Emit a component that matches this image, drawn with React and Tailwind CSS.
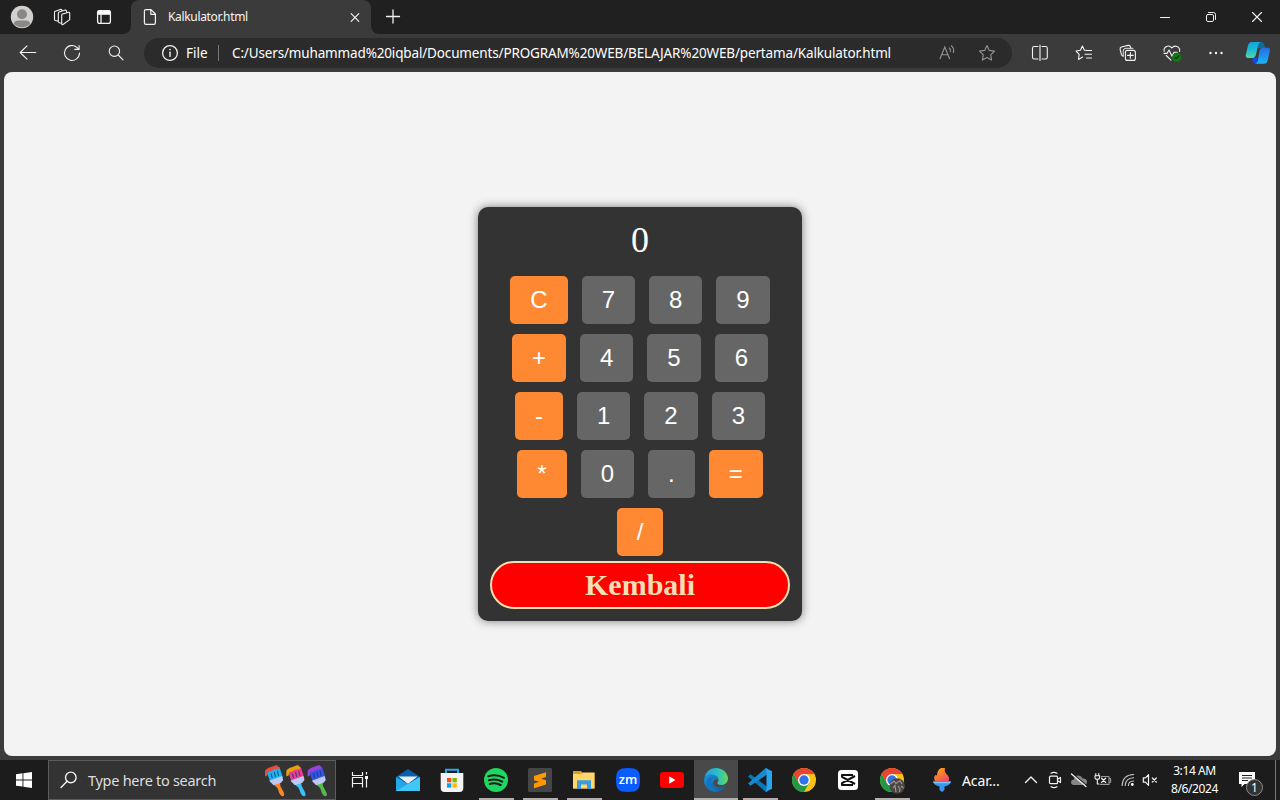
import React from "react";

const Icon = ({ w = 20, h = 20, sw = 1.1, children }) => (
  <svg width={w} height={h} viewBox={`0 0 ${w} ${h}`} fill="none" stroke="#f2f2f2" strokeWidth={sw} strokeLinecap="round" strokeLinejoin="round" className="block shrink-0">
    {children}
  </svg>
);

const Cell = ({ className = "", children }) => (
  <div className={`flex shrink-0 items-center justify-center ${className}`}>{children}</div>
);

const STAR = "M10 2.6 12.3 7.4 17.5 8.1 13.7 11.8 14.6 17.1 10 14.6 5.4 17.1 6.3 11.8 2.5 8.1 7.7 7.4Z";

function TitleBar() {
  return (
    <div className="flex h-[34px] bg-[#202020]">
      <Cell className="w-11">
        <Icon w={24} h={24}>
          <circle cx="12" cy="12" r="11.2" fill="#d2d0ce" stroke="none" />
          <circle cx="12" cy="9.3" r="5" fill="#8a8886" stroke="none" />
          <path d="M3.6 18.6Q5 15.5 8 15.5H16Q19 15.5 20.4 18.6A11.2 11.2 0 0 1 3.6 18.6Z" fill="#8a8886" stroke="none" />
        </Icon>
      </Cell>
      <Cell className="w-9">
        <Icon w={20} h={20}>
          <path d="M10 7.2 16.6 5.2Q17.7 5 17.7 6.2V12.6L11 17.5Q9.7 18.2 9.7 16.7V8.3Q9.7 7.4 10.2 7.1ZM9.3 16.3 7.3 15.7Q6.3 15.3 6.3 14.4V6.3Q6.3 5.4 7.1 5.1L13.3 3.1Q14.5 3 14.7 5M6.2 14.3 3.4 13.5Q2.5 13.2 2.5 12.2V5.3Q2.5 4.5 3.3 4.2L8.3 2.5Q9.7 2.1 10 3.5" />
        </Icon>
      </Cell>
      <Cell className="w-[51px] pr-[3px]">
        <Icon w={18} h={18} sw={1.3}>
          <rect x="2.6" y="2.6" width="12.8" height="12.8" rx="2.2" />
          <path d="M2.6 6.2V4.8Q2.6 2.6 4.8 2.6H13.2Q15.4 2.6 15.4 4.8V6.2Z" fill="#fff" />
          <path d="M6 6.5V15" />
        </Icon>
      </Cell>
      <div className="relative flex w-60 items-center rounded-t-lg bg-[#3b3b3b]">
        <svg width="8" height="8" className="absolute -left-2 bottom-0"><path d="M8 0V8H0A8 8 0 0 0 8 0Z" fill="#3b3b3b" /></svg>
        <svg width="8" height="8" className="absolute -right-2 bottom-0"><path d="M0 0V8H8A8 8 0 0 1 0 0Z" fill="#3b3b3b" /></svg>
        <Cell className="w-[37px]">
          <Icon w={16} h={18} sw={1.2}>
            <path d="M4 1.6H9L13.4 6V14.7Q13.4 16.4 11.8 16.4H4Q2.4 16.4 2.4 14.8V3.2Q2.4 1.6 4 1.6ZM8.8 1.8V6.3H13.2" />
          </Icon>
        </Cell>
        <span className="w-[168px] whitespace-nowrap text-xs tracking-[-0.33px] text-[#f5f5f5]">Kalkulator.html</span>
        <Cell className="w-[35px] pl-[3px]"><Icon w={12} h={12} sw={1.2}><path d="M2.2 2.7 9.8 10.3M9.8 2.7 2.2 10.3" /></Icon></Cell>
      </div>
      <Cell className="w-[43px]"><Icon w={16} h={16} sw={1.3}><path d="M1.5 7.5H14.5M8 1V14" /></Icon></Cell>
      <div className="flex-1" />
      <Cell className="w-[46px]"><Icon w={12} h={12}><path d="M1.5 6.5H10.5" /></Icon></Cell>
      <Cell className="w-[46px]"><Icon w={12} h={12} sw={1}><rect x="1.5" y="3.5" width="7" height="7" rx="1.4" /><path d="M3.5 1.5H8.5Q10.5 1.5 10.5 3.5V8.5" /></Icon></Cell>
      <Cell className="w-[46px]"><Icon w={12} h={12}><path d="M1.5 1.5 10.5 10.5M10.5 1.5 1.5 10.5" /></Icon></Cell>
    </div>
  );
}

function Toolbar() {
  return (
    <div className="flex h-[38px] bg-[#3b3b3b] pl-1.5">
      <Cell className="w-11"><Icon><path d="M2.5 9.5H17.8M9 2.8 2.2 9.5 9 16.2" /></Icon></Cell>
      <Cell className="w-11"><Icon><path d="M17.5 10A7.5 7.5 0 1 1 14.9 4.3L17 6.3M17.1 2.5V6.4H12.7" /></Icon></Cell>
      <Cell className="w-11"><Icon><circle cx="8.4" cy="8.2" r="5.2" /><path d="M12.2 12 17 16.8" /></Icon></Cell>
      <div className="ml-1.5 mt-1 flex h-[30px] w-[868px] shrink-0 items-center rounded-full bg-[#2b2b2b] pl-4 pr-[15px] text-white">
        <Icon sw={1.3}><circle cx="10" cy="10" r="7.4" /><path d="M10 9.2V13.4" strokeWidth="1.4" /><circle cx="10" cy="6.6" r=".8" fill="#fff" stroke="none" /></Icon>
        <span className="ml-1.5 w-8 pt-px text-[13.5px]">File</span>
        <span className="h-4 w-px bg-[#777]" />
        <span className="ml-[13px] flex-1 whitespace-nowrap pt-px text-[13.5px] tracking-[-0.15px]">C:/Users/muhammad%20iqbal/Documents/PROGRAM%20WEB/BELAJAR%20WEB/pertama/Kalkulator.html</span>
        <svg width="20" height="20" viewBox="0 0 20 20" fill="none" stroke="#949494" strokeWidth="1.1" strokeLinecap="round" className="mr-5">
          <path d="M3 15.8 7.8 4 12.6 15.8M4.7 11.7H11M12.3 5Q13.8 6.3 13.4 8.6M14.3 2.8Q17.5 5.2 16.4 9.5" />
        </svg>
        <svg width="20" height="20" viewBox="0 0 20 20" fill="none" stroke="#949494" strokeWidth="1.1" strokeLinejoin="round"><path d={STAR} /></svg>
      </div>
      <Cell className="ml-1.5 w-11"><Icon><path d="M8 3.5H4.3Q2.5 3.5 2.5 5.3V14.2Q2.5 16 4.3 16H8M12 3.5H15.5Q17.3 3.5 17.3 5.3V14.2Q17.3 16 15.5 16H12M10 2V17.5" /></Icon></Cell>
      <Cell className="w-11"><Icon><path d="M12.3 7.3H10.4L8.4 3 6.4 7.3 2 8 5.2 11.3 4.5 16.4 8.6 14.1M12.5 7.5H17.5M11 11.3H17.5M12.5 15H17.5" /></Icon></Cell>
      <Cell className="w-11"><Icon><rect x="7.4" y="7.4" width="10" height="10" rx="2" /><path d="M12.4 9.5V15.3M9.5 12.4H15.3M5.2 13.2 4.8 13Q3.8 12.5 3.4 11.4L2.1 6.3Q1.8 4.6 3.5 4L10 2.4Q11.7 2.1 12.3 3.5L12.8 5.1" /><path d="M15 5.3H8Q5.2 5.3 5.2 8V13" strokeWidth=".9" /></Icon></Cell>
      <Cell className="w-11">
        <Icon>
          <path d="M2.1 8.3C1.4 3.4 7 1.3 9.8 5 12.6 1.3 18.6 3.5 17.5 8.4M2 10.4H5L7 7 10 13.2 12 9.2H15.3M4.2 12.5 9 17.2" />
          <circle cx="14.8" cy="14.3" r="4.5" fill="#107c10" stroke="none" /><path d="M12.9 14.3 14.2 15.6 16.8 13" stroke="#062d06" />
        </Icon>
      </Cell>
      <Cell className="w-11"><Icon><g fill="#f5f5f5" stroke="none"><circle cx="4.5" cy="10" r="1.2" /><circle cx="10" cy="10" r="1.2" /><circle cx="15.5" cy="10" r="1.2" /></g></Icon></Cell>
      <Cell className="w-10">
        <svg width="26" height="24" viewBox="0 0 26 24">
          <defs>
            <linearGradient id="copA" x1="0" y1="0" x2="0" y2="1"><stop stopColor="#16a3dc" /><stop offset=".5" stopColor="#1bbdd3" /><stop offset="1" stopColor="#58d49c" /></linearGradient>
            <linearGradient id="copB" x1="0" y1="0" x2="0" y2="1"><stop stopColor="#256ddd" /><stop offset="1" stopColor="#1bb5f6" /></linearGradient>
          </defs>
          <path d="M13 1H16.5Q18.4 1 19 3L20 7H12.5Z" fill="#096c99" />
          <path d="M7 16.5H12V22.8H11Q8.3 22.8 7.6 20Z" fill="#1649dc" />
          <path d="M6.8 1H16Q14 1.4 13.2 4L11 13.5Q10.2 17 7.2 17H3Q.2 17 .8 13.6L3.2 4Q4.1 1 6.8 1Z" fill="url(#copA)" />
          <path d="M17.2 6.8H22.8Q25.6 7 24.8 10.3L22.5 20Q21.7 22.8 18.8 22.8H10Q12.3 22.2 12.8 19.6L14.6 9.5Q15.1 6.8 17.2 6.8Z" fill="url(#copB)" />
        </svg>
      </Cell>
    </div>
  );
}

const ROWS = [["C", "7", "8", "9"], ["+", "4", "5", "6"], ["-", "1", "2", "3"], ["*", "0", ".", "="], ["/"]];

function Calculator() {
  return (
    <div className="flex h-[414px] w-[324px] flex-col rounded-[10px] bg-[#333] px-3 pb-3 pt-[13px] shadow-[0_0_10px_rgba(0,0,0,0.5)]">
      <div className="h-[56px] text-center font-['Liberation_Serif',serif] text-4xl leading-[41px] text-white">0</div>
      <div className="flex flex-col gap-2.5">
        {ROWS.map((row) => (
          <div key={row[0]} className="flex justify-center gap-3.5">
            {row.map((k) => (
              <button key={k} className={`h-12 rounded-[5px] px-5 font-['Liberation_Sans',sans-serif] text-2xl leading-none text-white ${/[0-9.]/.test(k) ? "bg-[#666]" : "bg-[#ff8833]"}`}>{k}</button>
            ))}
          </div>
        ))}
      </div>
      <button className="mt-[5px] h-12 w-[300px] shrink-0 rounded-full border-2 border-[#f5deb3] bg-[red] font-['Liberation_Serif',serif] text-[30px] font-bold leading-none text-[#f5deb3]">Kembali</button>
    </div>
  );
}

const Brush = ({ x, rim, bristle, handle }) => (
  <g transform={`translate(${x} 0)`}>
    <path d="M9 19 15 17Q14.5 21 17.5 25 20.5 30 18.5 31 16 32 14 27.5Q12.8 22 10 21Z" fill={handle} />
    <path d="M1.5 6 14.5 2 18 13 5.5 17.5Z" fill={bristle} />
    <path d="M0 11.5V6Q1 3.5 6 2L11.5 0 14 2.3 13.4 4.2 9 4.6 6 6.6 3 7 2.3 10.5Z" fill={rim} />
    <path d="M6 8.5 7.2 13M9.2 7 10.5 12M12.4 5.8 13.6 11" stroke="#17366f" strokeOpacity=".75" strokeWidth="1.1" />
    <path d="M4.2 15.8 17 11 18.2 15 16 17.8 8.6 20.2Z" fill="#bdc8f5" />
  </g>
);

const Chrome = () => (
  <>
    <circle cx="12" cy="12" r="12" fill="#fbc116" />
    <path d="M12 12 6.8 15 1.6 6A12 12 0 0 0 12 24L17.2 15Z" fill="#229a45" />
    <path d="M1.6 6A12 12 0 0 1 22.4 6H12L6.8 15Z" fill="#ea4335" />
    <circle cx="12" cy="12" r="6" fill="#fff" /><circle cx="12" cy="12" r="4.7" fill="#3173e8" />
  </>
);

const APPS = [
  { id: "mail", art: <><path d="M0 9 12 1 24 9V13H0Z" fill="#0861ae" /><path d="M2.5 8.5H21.5L12 16Z" fill="#eceff2" /><path d="M0 9 12 16 24 9V23H0Z" fill="#23a7e8" /><path d="M0 23 24 9V23Z" fill="#41c7f6" /></> },
  { id: "store", art: <><path d="M6 6V1.8H18V6" fill="none" stroke="#28a8ea" strokeWidth="2" /><path d="M.7 5H23.3V20Q23.3 24 19.5 24H4.5Q.7 24 .7 20Z" fill="#f3f3f3" /><path d="M7 10H11.3V14.3H7Z" fill="#f25022" /><path d="M12.5 10H16.8V14.3H12.5Z" fill="#7fba00" /><path d="M7 15.3H11.3V19.6H7Z" fill="#00a4ef" /><path d="M12.5 15.3H16.8V19.6H12.5Z" fill="#ffb900" /></> },
  { id: "spotify", open: true, art: <><circle cx="12" cy="12" r="12" fill="#1ed760" /><path d="M4.3 8.2Q12.5 5.8 20 9.8M5 12.2Q12 10.1 18.3 13.6M5.7 16Q11.7 14.3 16.7 17" stroke="#1b1b1b" strokeWidth="2" strokeLinecap="round" fill="none" /></> },
  { id: "sublime", open: true, art: <><rect width="24" height="24" rx="1.5" fill="#464646" /><path d="M6 8 18 4.2V9L13 10.7 18 12.3V16.5L6 20.3V15.5L11.2 13.8 6 12.2Z" fill="#ff9800" /></> },
  { id: "explorer", open: true, art: <><path d="M1 3H9L11 5H22.5V20.5H1Z" fill="#dca01d" /><path d="M1 6H9L11 4.5H22.5V20.5H1Z" fill="#ffd66b" /><path d="M5 21V12.2H19V21H15V16.5H9V21Z" fill="#3c9ddd" /></> },
  { id: "zoom", art: <><path d="M12 0C21.5 0 24 2.5 24 12S21.5 24 12 24 0 21.5 0 12 2.5 0 12 0Z" fill="#0b5cff" /><text x="12" y="15.5" textAnchor="middle" textLength="18.5" lengthAdjust="spacingAndGlyphs" fill="#fff" fontSize="13" fontWeight="600" fontFamily="Open Sans">zm</text></> },
  { id: "youtube", art: <><rect y="4" width="24" height="16" rx="3" fill="#f00" /><path d="M9.2 8.2 15.5 12 9.2 15.8Z" fill="#fff" /></> },
  { id: "edge", open: true, active: true, art: <><defs><linearGradient id="edTop"><stop stopColor="#279de0" /><stop offset=".55" stopColor="#29bfca" /><stop offset="1" stopColor="#62dc51" /></linearGradient><linearGradient id="edLow" x1="0" y1="0" x2="1" y2="1"><stop stopColor="#1592d7" /><stop offset="1" stopColor="#1b559c" /></linearGradient></defs><path d="M.5 10C1.5 4 6 0 12 0 19 0 24 5.3 24 10.5 24 14.3 21 17 17.2 17 14 17 12.8 15.7 13.3 14.6 15.5 13 14.7 9.5 12 8 8.5 6.2 2.2 7 .5 10Z" fill="url(#edTop)" /><path d="M0 12C.2 7.8 5 5.5 9.3 6.8 12 7.6 14.7 10.2 14 12.5 11.5 10 8.5 13 9.4 16.2 10.8 20 18 20.5 22.4 17.3 20.5 21 16.5 24 12 24 5.3 24 0 18.6 0 12Z" fill="url(#edLow)" /><path d="M9 9.8C5 12.7 7 21 15.2 23.3 6.8 25.5 1 19 3 12.8 4 10 6.7 9 9 9.8Z" fill="#1275bd" /></> },
  { id: "code", open: true, art: <><path d="M0 8.5 2.5 6.3 19 18.6V24L17.5 23.8Z" fill="#0877b9" /><path d="M0 15.4 17.5.2 19 0V6.5L2.5 17.7Z" fill="#1689cf" /><path d="M17.5 0 24 3.2V20.8L17.5 24 18.5 21V3Z" fill="#25a6ee" /></> },
  { id: "chrome", art: <Chrome /> },
  { id: "capcut", art: <><rect x="2" y="2" width="20" height="20" rx="3.5" fill="#fff" /><path d="M17 7H6V8.8L19 16M17 17H6V15.2L19 8" fill="none" stroke="#111" strokeWidth="2.1" strokeLinejoin="round" /></> },
  { id: "chrome-profile", open: true, art: <><Chrome /><circle cx="17.2" cy="18" r="7.7" fill="#4b4543" /><path d="M10.5 16 14 13 16 15.5 20 12.5 22 16M13 20 15 17.5 16 24M18 18 20 21 19.5 24M21 18 23.5 20" stroke="#a39b97" strokeWidth="1.1" fill="none" /></> },
];

function Taskbar() {
  return (
    <div className="flex h-10 bg-[#1c1c1c] text-white">
      <Cell className="w-12"><svg width="16" height="16" viewBox="0 0 16 16" fill="#fff"><path d="M0 2.2 6.5 1.3V7.4H0ZM7.4 1.2 16 0V7.4H7.4ZM0 8.4H6.5V14.6L0 13.7ZM7.4 8.4H16V16L7.4 14.8Z" /></svg></Cell>
      <div className="flex w-72 items-center border border-[#5c5c5c] bg-[#333] pl-[11px] pr-[6px]">
        <Icon w={17} h={18} sw={1.4}><circle cx="10.8" cy="6.4" r="5.3" /><path d="M7.1 10.2 1 16.5" /></Icon>
        <span className="ml-[11px] w-[177px] whitespace-nowrap pt-0.5 text-[14.5px] tracking-[-0.28px] text-[#dedede]">Type here to search</span>
        <svg width="64" height="32" viewBox="0 0 64 32" className="shrink-0 translate-y-px">
          <Brush x={0} rim="#e94b40" bristle="#1db3f0" handle="#f98628" />
          <Brush x={21.3} rim="#e8a00c" bristle="#eb3e96" handle="#3ac1f5" />
          <Brush x={42.6} rim="#9a43db" bristle="#3355e6" handle="#57b94c" />
        </svg>
      </div>
      <Cell className="w-[50px] pr-0.5">
        <Icon w={18} h={18} sw={1.2}><path d="M1.5 1.5V4.5H11.5V1.5M1.5 16V12.5H11.5V16M1.5 6.5H11.5V12.5H1.5ZM15.5 1.5V3M15.5 8V16" strokeLinecap="square" /><path d="M14 5H17V8H14Z" fill="#fff" stroke="none" /></Icon>
      </Cell>
      {APPS.map((a) => (
        <div key={a.id} className={`relative flex h-10 w-11 shrink-0 items-center justify-center ${a.active ? "bg-[#494949]" : ""}`}>
          <svg width="24" height="24" viewBox="0 0 24 24" className="overflow-visible">{a.art}</svg>
          {a.open && <span className={`absolute bottom-0 h-0.5 bg-[#b5b0ad] ${a.active ? "w-full" : "w-[35px]"}`} />}
        </div>
      ))}
      <Cell className="ml-[19px] w-[18px]">
        <svg width="18" height="24" viewBox="0 0 18 24"><defs><linearGradient id="flame" x1="0" y1="0" x2=".7" y2="1"><stop stopColor="#ffb400" /><stop offset="1" stopColor="#f44b62" /></linearGradient></defs><path d="M2 13Q0 9 2.5 7L4 7.5Q4 2 8 0H12Q11 3.5 13.5 6 17.5 9.5 15.5 13Z" fill="url(#flame)" /><path d="M0 13.5H18Q17 17.5 11.5 18.5V22L9 24 6.5 22V18.5Q1 17.5 0 13.5Z" fill="#3797f0" /><path d="M0 13.5H18L17 15.2H1Z" fill="#79c7fc" /></svg>
      </Cell>
      <div className="ml-[11px] flex w-14 items-center whitespace-nowrap pt-0.5 text-sm tracking-[-0.1px]">Acar...</div>
      <Cell className="w-[25px]"><Icon w={14} h={10} sw={1.4}><path d="M1.5 7.5 7 2 12.5 7.5" /></Icon></Cell>
      <Cell className="w-6"><Icon w={14} h={18} sw={1.2}><rect x="1.5" y="5.2" width="8" height="7.5" rx="1" /><path d="M9.8 8 12.5 6.4V11.6L9.8 10M3 2.2Q6 .5 9 2.2M3 15.7Q6 17.4 9 15.7" /></Icon></Cell>
      <Cell className="w-6"><Icon w={18} h={16}><path d="M4.5 13Q1 13 1 10.2 1.2 7.7 3.7 7.6 4.5 3.6 8.3 3.4 11.3 3.5 12.8 6.5 16.8 6.4 17 9.8 17 13 14 13Z" fill="#858585" stroke="none" /><path d="M2.6 1.6 16.8 13.6" stroke="#1c1c1c" strokeWidth="1.2" /><path d="M1.5 2 16 14.5" stroke="#f0f0f0" strokeWidth="1.3" /></Icon></Cell>
      <Cell className="w-[24px]"><Icon w={18} h={16}><path d="M1.8 1.5V3.5M4.8 1.5V3.5M1 3.7H5.6V5.5Q5.6 7.2 3.3 7.4 1 7.2 1 5.5ZM3.3 7.8V12H5" /><path d="M7.5 4.5H15V12.4H6.5M15.3 6.5H16.6V10.2H15.3" stroke="#999" /><path d="M7.6 6.3 11.6 10.4M11.6 6.3 7.6 10.4" strokeWidth="1.3" /></Icon></Cell>
      <Cell className="w-[26px]"><Icon w={14} h={14}><path d="M1.2 12.5Q1.5 2 12.6 1.5M4.2 12.5Q4.5 5 12.6 4.7M7.4 12.5Q7.6 8.2 12.6 8" stroke="#c9c9c9" /><circle cx="11.3" cy="11.5" r="1.4" fill="#fff" stroke="none" /></Icon></Cell>
      <Cell className="w-[18px]"><Icon w={16} h={14} sw={1.2}><path d="M1.3 4.8H3.5L6.5 1.7V12.3L3.5 9.2H1.3ZM10.3 5 14.3 9M14.3 5 10.3 9" /></Icon></Cell>
      <div className="flex w-[71px] flex-col items-center justify-center text-[12px] leading-[18px] tracking-[-0.4px]"><span>3:14 AM</span><span>8/6/2024</span></div>
      <div className="relative flex w-[46px] items-center border-r border-[#777] pl-[9px]">
        <svg width="17" height="17" viewBox="0 0 17 17"><path d="M0 0H16V12H5.5L2.5 15V12H0Z" fill="#fff" /><path d="M3 3.5H13M3 6H13M3 8.5H9" stroke="#222" /></svg>
        <span className="absolute left-[16px] top-[19px] flex h-[17px] w-[17px] items-center justify-center rounded-full border border-[#8c8c8c] bg-[#333] text-[12px] leading-none">1</span>
      </div>
      <div className="flex-1" />
    </div>
  );
}

export default function App() {
  return (
    <div className="flex h-[800px] w-[1280px] flex-col overflow-hidden bg-[#3b3b3b] font-['Noto_Sans','Open_Sans',sans-serif]">
      <TitleBar />
      <Toolbar />
      <main className="mx-1 mb-1 flex h-[684px] items-center justify-center rounded-lg bg-[#f3f3f3]">
        <Calculator />
      </main>
      <Taskbar />
    </div>
  );
}
